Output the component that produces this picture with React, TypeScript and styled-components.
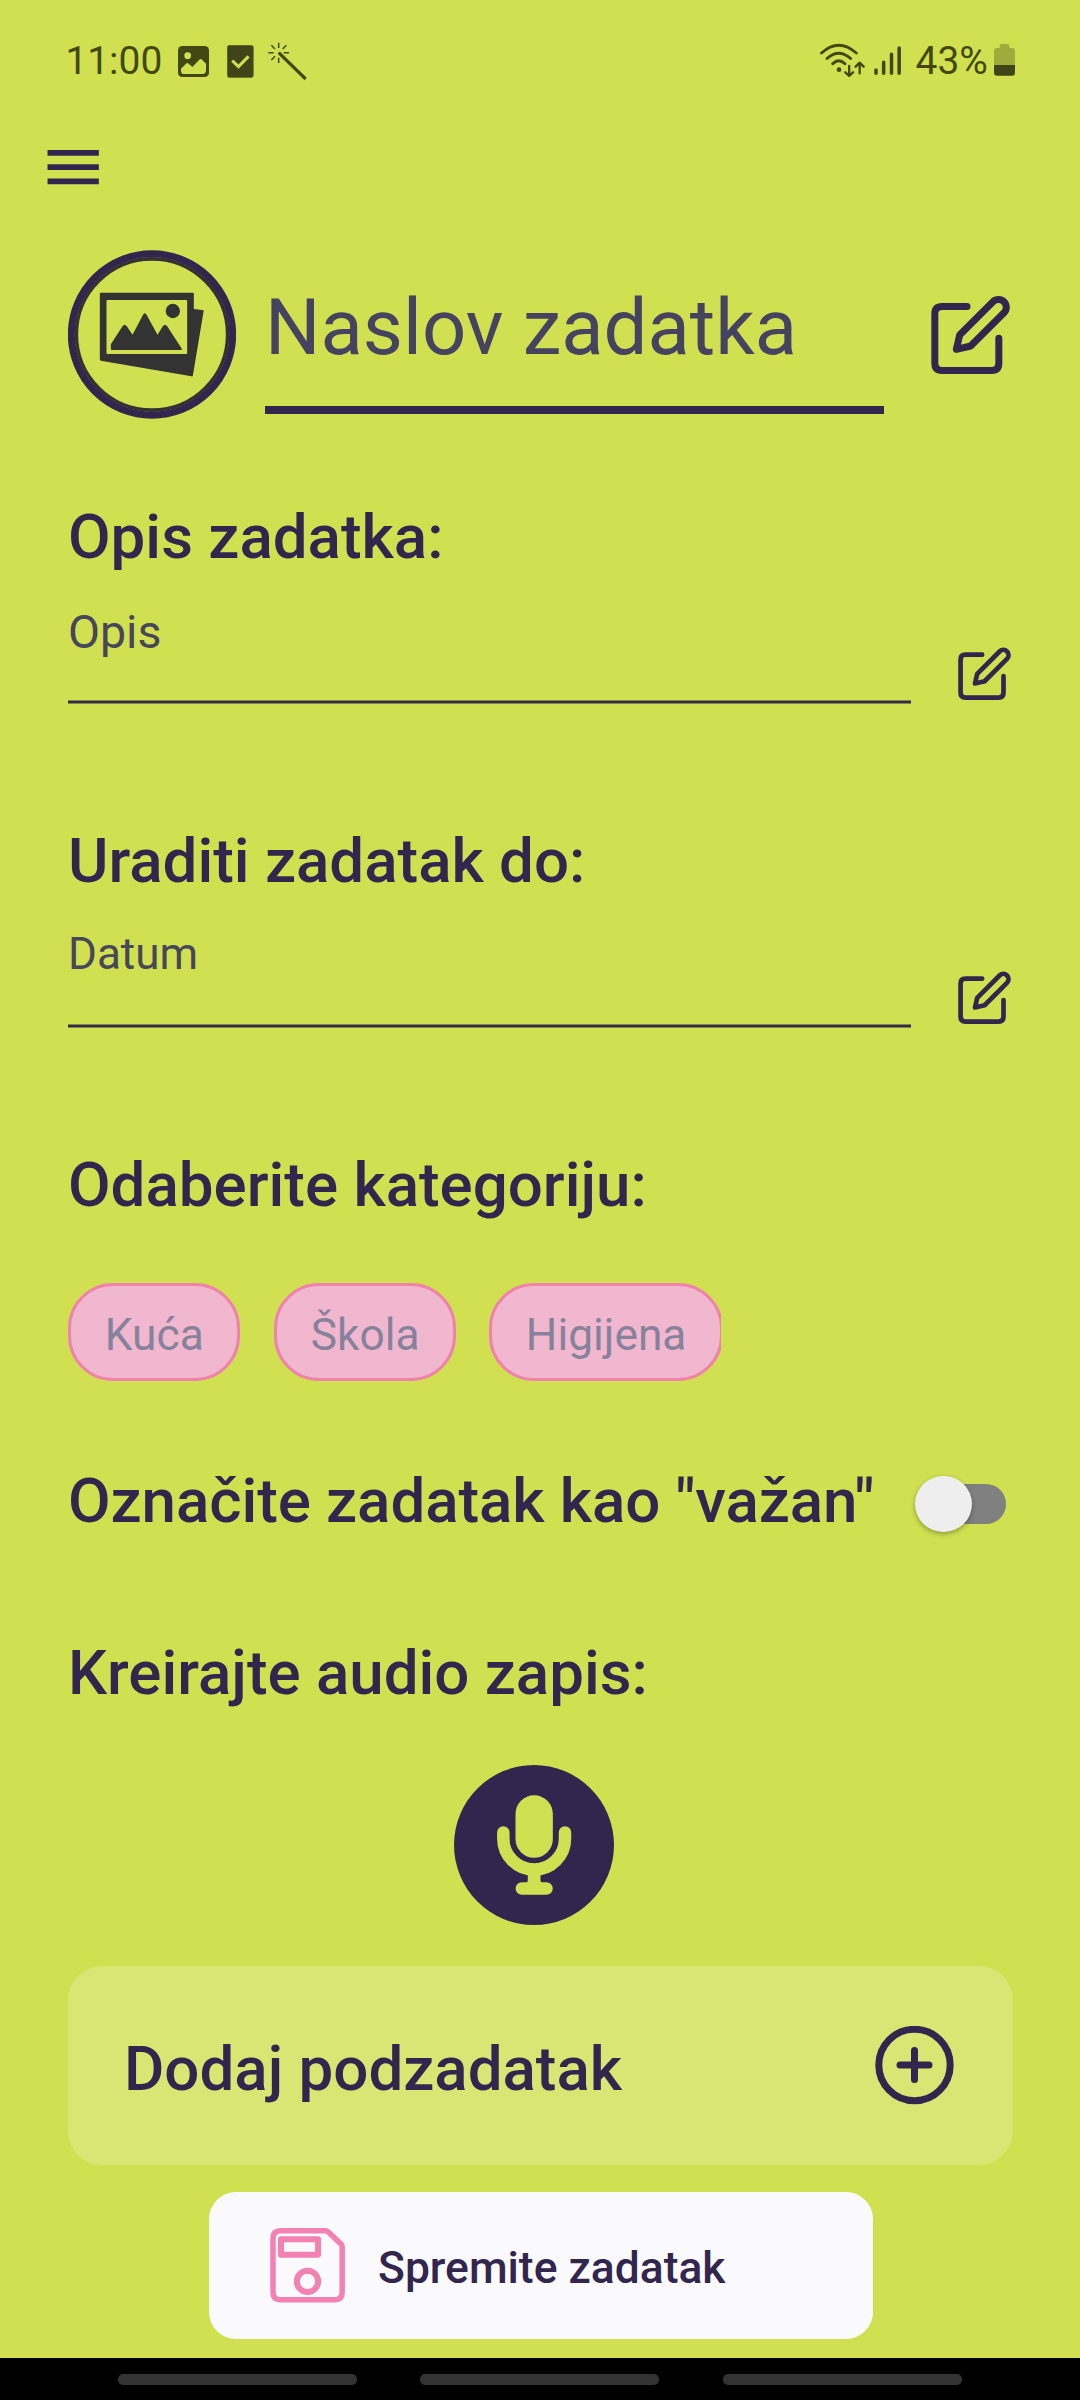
import React from 'react';
import styled, { createGlobalStyle } from 'styled-components';

const ink = '#32264f';
const lime = '#d0e050';
const statusInk = '#424811';

const GlobalStyle = createGlobalStyle`
  * { box-sizing: border-box; }
  body {
    margin: 0;
    background: ${lime};
    font-family: Roboto, "Liberation Sans", sans-serif;
  }
  svg { display: block; flex: none; }
`;

const Screen = styled.div`
  width: 1080px;
  height: 2400px;
  display: flex;
  flex-direction: column;
  overflow: hidden;
  background: ${lime};
  color: ${ink};
`;

const StatusBar = styled.header`
  height: 120px;
  padding: 38px 64.6px 0 65.4px;
  display: flex;
  justify-content: space-between;
  align-items: flex-start;
`;

const StatusGroup = styled.div`
  display: flex;
  height: 46px;
  color: ${statusInk};
`;

const StatusText = styled.span<{ $width: number }>`
  width: ${(p) => p.$width}px;
  font-size: 38.9px;
  line-height: 46px;
  white-space: nowrap;
`;

const Gap = styled.span<{ $w: number }>`
  width: ${(p) => p.$w}px;
`;

const TopBar = styled.nav`
  height: 130px;
  padding: 13px 0 0 39px;
`;

const PlainButton = styled.button`
  display: block;
  padding: 0;
  border: 0;
  background: none;
  color: inherit;
  font: inherit;
`;

const Content = styled.main`
  flex: 1;
  padding: 0 67px 0 68px;
  display: flex;
  flex-direction: column;
`;

const TitleRow = styled.div`
  display: flex;
  align-items: flex-start;
  height: 169px;
`;

const TitleField = styled.div`
  width: 619px;
  height: 164px;
  margin-left: 29px;
  padding-top: 32px;
  border-bottom: 8px solid ${ink};
  font-size: 77.8px;
  line-height: 91px;
  color: #464360;
  white-space: nowrap;
`;

const TitleEdit = styled(PlainButton)`
  margin: 45px 0 0 47px;
`;

const Heading = styled.h2`
  margin: 0;
  font-size: 61.85px;
  line-height: 72px;
  font-weight: 500;
  white-space: nowrap;
`;

const Field = styled.section<{ $top: number }>`
  margin-top: ${(p) => p.$top}px;
`;

const FieldRow = styled.div`
  display: flex;
  align-items: flex-start;
  margin-top: 32px;
  height: 99px;
`;

const FieldInput = styled.div<{ $size: number; $line: number }>`
  width: 843px;
  height: 99px;
  display: flex;
  flex-direction: column;
  justify-content: space-between;
  font-size: ${(p) => p.$size}px;
  line-height: ${(p) => p.$line}px;
  color: #47465a;
`;

const Underline = styled.div`
  height: 4px;
  background: #322a48;
  border: solid rgba(208, 224, 80, 0.5);
  border-width: 1px 0;
`;

const FieldEdit = styled(PlainButton)`
  margin: 42px 0 0 47px;
`;

const ChipList = styled.div`
  display: flex;
  width: 653px;
  margin-top: 62px;
  overflow: hidden;
`;

const Chip = styled.button<{ $width: number; $after: number }>`
  flex: none;
  width: ${(p) => p.$width}px;
  height: 98px;
  margin-right: ${(p) => p.$after}px;
  padding: 23px 0 0 33.8px;
  border: 3px solid #f083aa;
  border-radius: 45px;
  background: #f0b7ce;
  color: #87829c;
  font-family: inherit;
  font-size: 44.3px;
  line-height: 52px;
  text-align: left;
  display: flex;
  align-items: flex-start;
`;

const ImportantRow = styled.div`
  display: flex;
  margin-top: 84px;
  height: 72px;
  letter-spacing: -0.06px;
`;

const Switch = styled.div`
  display: flex;
  align-items: center;
  width: 91px;
  height: 57px;
  margin: 10.5px 6.6px 0 auto;
`;

const Thumb = styled.span`
  z-index: 1;
  flex: none;
  width: 56.5px;
  height: 56.5px;
  border-radius: 50%;
  background: #eeeeee;
  box-shadow: 0 2px 5px rgba(0, 0, 0, 0.32);
`;

const Track = styled.span`
  flex: none;
  width: 77px;
  height: 40px;
  margin-left: -42.5px;
  border-radius: 20px;
  background: #808080;
`;

const Recorder = styled(PlainButton)`
  margin: 56px 0 0 386.4px;
  width: 160px;
`;

const SubtaskCard = styled.section`
  display: flex;
  height: 199px;
  margin-top: 41px;
  padding: 67px 59px 0 56px;
  justify-content: space-between;
  align-items: flex-start;
  border-radius: 34px;
  background: #d9e673;
`;

const AddButton = styled(PlainButton)`
  margin-top: -7px;
`;

const SaveButton = styled.button`
  display: flex;
  width: 664px;
  height: 147px;
  margin: 27px 0 0 141px;
  padding: 0 0 0 61px;
  align-items: flex-start;
  border: 0;
  border-radius: 27px;
  background: #fafafc;
  color: ${ink};
  font-family: inherit;
  font-weight: 500;
  font-size: 44.4px;
  line-height: 52px;

  svg { margin: 35.7px 33px 0 0; }
  span { margin-top: 50px; }
`;

const NavBar = styled.footer`
  display: flex;
  gap: 63px;
  height: 42px;
  padding: 16px 0 0 118px;
  background: #000;
`;

const NavPill = styled.span`
  width: 239px;
  height: 11px;
  border-radius: 5px;
  background: #333;

  &:last-child { margin-left: 1px; }
`;

const PictureStatusIcon = () => (
  <svg width="31" height="46" viewBox="414 54 93 138">
    <rect x="414" y="78" width="93" height="93" rx="13" fill="currentColor" />
    <circle cx="443" cy="107" r="10" fill={lime} />
    <path d="M423 146L438 131Q442 127 446 131L457 141L478 119Q482 115 486 119L498 131V151Q498 162 487 162H433Q423 162 423 152Z" fill={lime} />
  </svg>
);

const CheckStatusIcon = () => (
  <svg width="26.7" height="46" viewBox="561.5 54 80 138">
    <rect x="563" y="76.5" width="77" height="95.5" rx="5" fill="#3f4419" stroke="#5e6622" strokeWidth="3" />
    <path d="M577 122L596 140L626 109" fill="none" stroke={lime} strokeWidth="9" />
  </svg>
);

const WandIcon = () => (
  <svg width="38.7" height="46" viewBox="684 54 116 138" fill="none" stroke="currentColor">
    <path d="M716 98L797 177" strokeWidth="9.5" />
    <path strokeWidth="4.5" d="M716 68V84M716 113V129M685 98H701M731 98H747M694 76L705 87M739 76L728 87M694 120L705 109" />
  </svg>
);

const WifiIcon = () => (
  <svg width="45" height="46" viewBox="119 54 135 138" fill="none" stroke="currentColor" strokeLinecap="round" strokeLinejoin="round">
    <path strokeWidth="8.5" d="M123.500 99Q175 52 228 99M140 115.500Q175 84 211 115.500M157 131Q175 113 194 131" />
    <circle cx="176" cy="149" r="7" fill="currentColor" stroke="none" />
    <path strokeWidth="7" d="M206.500 138V168M195 157L206.500 168L218 157M238 160V129M226 140L238 128L250 140" />
  </svg>
);

const SignalIcon = () => (
  <svg width="27" height="46" viewBox="282 54 81 138" stroke="currentColor" strokeWidth="10.5" strokeLinecap="round">
    <path d="M288 150V160M311 127V160M334.500 103V160M357.500 84V160" />
  </svg>
);

const BatteryIcon = () => (
  <svg width="21" height="46" viewBox="642 54 63 138">
    <path d="M659 84V77Q659 72 664 72H683Q688 72 688 77V84H696Q705 84 705 93V135H642V93Q642 84 651 84Z" fill="#a0ab3c" />
    <path d="M642 135H705V158Q705 167 696 167H651Q642 167 642 158Z" fill="#3f4419" />
  </svg>
);

const MenuIcon = () => (
  <svg width="68.4" height="68.4" viewBox="0 0 24 24" fill="currentColor">
    <path d="M3 18h18v-2H3v2zm0-5h18v-2H3v2zm0-7v2h18V6H3z" />
  </svg>
);

const GalleryBadge = () => (
  <svg width="168" height="169" viewBox="54.5 60 504 507">
    <circle cx="306.500" cy="313.500" r="227" fill="none" stroke="#333333" strokeWidth="11" />
    <circle cx="306.500" cy="313.500" r="242" fill="none" stroke={ink} strokeWidth="21" />
    <path fill="#333333" fillRule="evenodd" d="M153 188H429Q432 188 432 191V237L461 241Q462 242 461 245L429 437Q428 440 425 439L153 392Q150 391 150 388V191Q150 188 153 188ZM173 210Q170 210 170 213V369Q170 372 173 372H409Q412 372 412 369V213Q412 210 409 210Z" />
    <path fill="#333333" d="M183 343L218 289Q224 280 231 289L248 314L279 256Q285 243 291 256L323 314L339 289Q345 280 352 289L396 356Q397 360 394 360H186Q183 360 183 357Z" />
    <circle cx="369" cy="243" r="21.5" fill="#333333" />
  </svg>
);

const EditIcon = ({ size }: { size: number }) => (
  <svg width={size} height={size} viewBox="453 75 237 237" fill="none" stroke="currentColor" strokeWidth="21" strokeLinecap="round" strokeLinejoin="round">
    <path d="M561 109.500H486Q464.500 109.500 464.500 131V280Q464.500 301.500 486 301.500H635Q656.500 301.500 656.500 280V205" />
    <path d="M529 238L539 195L639 95A23.300 23.300 0 0 1 672 128L572 228Z" />
  </svg>
);

const MicIcon = () => (
  <svg width="160" height="160" viewBox="72.5 75 480 480">
    <circle cx="312.500" cy="315" r="240" fill={ink} />
    <rect x="257" y="166" width="112" height="187.5" rx="56" fill={lime} />
    <path fill="none" stroke={lime} strokeWidth="37.5" strokeLinecap="round" d="M220.500 277.500V296A92.500 92.500 0 0 0 405.500 296V277.500M276 445.500H350" />
    <path fill={lime} d="M289 398H337Q332 404 332 408V421Q332 427 338 430H288Q294 427 294 421V408Q294 404 289 398Z" />
  </svg>
);

const PlusCircleIcon = () => (
  <svg width="79" height="79" viewBox="0 0 79 79" fill="none" stroke="currentColor" strokeWidth="7" strokeLinecap="round">
    <circle cx="39.500" cy="39" r="35.7" />
    <path d="M39.500 24.500V53.500M25 39H54" />
  </svg>
);

const FloppyIcon = () => (
  <svg width="75" height="75" viewBox="90 113 225 225" fill="none" stroke="#f381b1" strokeLinejoin="round">
    <path strokeWidth="16.5" d="M122 121.500H256Q261 121.500 265 125L302 160Q306.500 164 306.500 170V306Q306.500 328.500 285 328.500H121Q99 328.500 99 306V144Q99 121.500 122 121.500Z" />
    <rect x="123" y="146.500" width="111" height="47" strokeWidth="18" />
    <circle cx="202.500" cy="273" r="32" strokeWidth="18" />
  </svg>
);

export default function App() {
  return (
    <>
      <GlobalStyle />
      <Screen>
        <StatusBar>
          <StatusGroup>
            <StatusText $width={112.6}>11:00</StatusText>
            <PictureStatusIcon />
            <Gap $w={18.2} />
            <CheckStatusIcon />
            <Gap $w={14.1} />
            <WandIcon />
          </StatusGroup>
          <StatusGroup>
            <WifiIcon />
            <Gap $w={9.4} />
            <SignalIcon />
            <Gap $w={14.2} />
            <StatusText $width={78.8}>43%</StatusText>
            <BatteryIcon />
          </StatusGroup>
        </StatusBar>

        <TopBar>
          <PlainButton aria-label="Izbornik"><MenuIcon /></PlainButton>
        </TopBar>

        <Content>
          <TitleRow>
            <GalleryBadge />
            <TitleField>Naslov zadatka</TitleField>
            <TitleEdit><EditIcon size={79} /></TitleEdit>
          </TitleRow>

          <Field $top={82}>
            <Heading>Opis zadatka:</Heading>
            <FieldRow>
              <FieldInput $size={46.5} $line={54}>
                <span>Opis</span>
                <Underline />
              </FieldInput>
              <FieldEdit><EditIcon size={53} /></FieldEdit>
            </FieldRow>
          </Field>

          <Field $top={121}>
            <Heading>Uraditi zadatak do:</Heading>
            <FieldRow>
              <FieldInput $size={44} $line={50}>
                <span>Datum</span>
                <Underline />
              </FieldInput>
              <FieldEdit><EditIcon size={53} /></FieldEdit>
            </FieldRow>
          </Field>

          <Field $top={121}>
            <Heading>Odaberite kategoriju:</Heading>
            <ChipList>
              <Chip $width={172} $after={34}>Kuća</Chip>
              <Chip $width={182} $after={33}>Škola</Chip>
              <Chip $width={234} $after={0}>Higijena</Chip>
            </ChipList>
          </Field>

          <ImportantRow>
            <Heading>Označite zadatak kao "važan"</Heading>
            <Switch role="switch" aria-checked={false}>
              <Thumb />
              <Track />
            </Switch>
          </ImportantRow>

          <Field $top={100}>
            <Heading>Kreirajte audio zapis:</Heading>
            <Recorder><MicIcon /></Recorder>
          </Field>

          <SubtaskCard>
            <Heading>Dodaj podzadatak</Heading>
            <AddButton><PlusCircleIcon /></AddButton>
          </SubtaskCard>

          <SaveButton>
            <FloppyIcon />
            <span>Spremite zadatak</span>
          </SaveButton>
        </Content>

        <NavBar>
          <NavPill />
          <NavPill />
          <NavPill />
        </NavBar>
      </Screen>
    </>
  );
}
